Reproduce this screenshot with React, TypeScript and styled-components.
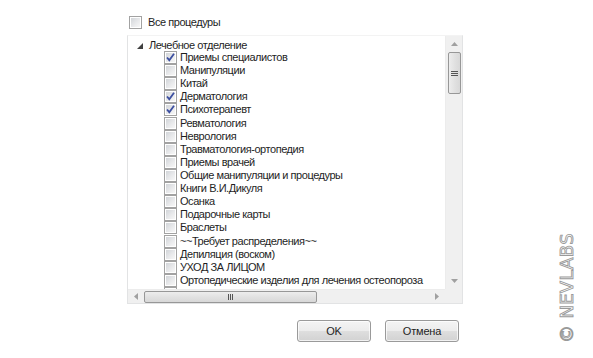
import React from 'react';
import styled, { createGlobalStyle } from 'styled-components';

const GlobalStyle = createGlobalStyle`
  html, body {
    margin: 0;
    padding: 0;
    background: #ffffff;
  }
  body {
    font-family: 'Liberation Sans', Arial, sans-serif;
    font-size: 11px;
    letter-spacing: -0.45px;
    color: #1e1e1e;
  }
`;

const ITEMS: { label: string; checked: boolean }[] = [
  { label: 'Приемы специалистов', checked: true },
  { label: 'Манипуляции', checked: false },
  { label: 'Китай', checked: false },
  { label: 'Дерматология', checked: true },
  { label: 'Психотерапевт', checked: true },
  { label: 'Ревматология', checked: false },
  { label: 'Неврология', checked: false },
  { label: 'Травматология-ортопедия', checked: false },
  { label: 'Приемы врачей', checked: false },
  { label: 'Общие манипуляции и процедуры', checked: false },
  { label: 'Книги В.И.Дикуля', checked: false },
  { label: 'Осанка', checked: false },
  { label: 'Подарочные карты', checked: false },
  { label: 'Браслеты', checked: false },
  { label: '~~Требует распределения~~', checked: false },
  { label: 'Депиляция (воском)', checked: false },
  { label: 'УХОД ЗА ЛИЦОМ', checked: false },
  { label: 'Ортопедические изделия для лечения остеопороза', checked: false },
  { label: 'Прочее', checked: false },
];

const Page = styled.div`
  position: relative;
  width: 593px;
  height: 358px;
  overflow: hidden;
  display: flex;
  flex-direction: column;
  box-sizing: border-box;
  padding: 16px 0 0 127px;
`;

const Row = styled.label`
  display: flex;
  align-items: center;
  gap: 5px;
  height: 13px;
  white-space: nowrap;
  line-height: 13px;
`;

const Box = styled.span`
  position: relative;
  flex: 0 0 auto;
  width: 13px;
  height: 13px;
  box-sizing: border-box;
  border: 1px solid #a2a2a2;
  background: #ffffff;
  &::after {
    content: '';
    position: absolute;
    inset: 1px;
    background: linear-gradient(135deg, #d2d5d9 0%, #e8e9eb 55%, #f7f7f7 100%);
  }
  svg {
    position: absolute;
    left: 0;
    top: 0;
    z-index: 1;
  }
`;

function Checkbox({ checked }: { checked: boolean }) {
  return (
    <Box>
      {checked && (
        <svg width="11" height="11" viewBox="0 0 11 11">
          <path d="M2 5.5 L4.3 8.2 L9 1.8" fill="none" stroke="#3c4fa0" strokeWidth="1.8" />
        </svg>
      )}
    </Box>
  );
}

const AllRow = styled(Row)`
  margin-left: 2px;
  gap: 6px;
`;

const Tree = styled.div`
  margin-top: 6px;
  width: 336px;
  height: 269px;
  box-sizing: border-box;
  border: 1px solid #e2e3e4;
  border-top-color: #f3f3f3;
  display: grid;
  grid-template-columns: 1fr 17px;
  grid-template-rows: 1fr 14px;
`;

const Viewport = styled.div`
  overflow: hidden;
  padding: 3px 0 0 9px;
`;

const GroupRow = styled.div`
  display: flex;
  align-items: center;
  gap: 6px;
  height: 12px;
  line-height: 12px;
  white-space: nowrap;
`;

const Expander = styled.svg`
  width: 6px;
  height: 6px;
  margin-top: 1px;
`;

const Children = styled.div`
  padding-left: 27px;
  display: flex;
  flex-direction: column;
`;

const ItemRow = styled(Row)`
  height: 13.12px;
  gap: 3px;
`;

const VBar = styled.div`
  background: #f0f0f0;
  border-left: 1px solid #ececec;
  display: flex;
  flex-direction: column;
  align-items: center;
`;

const HBar = styled.div`
  background: #f0f0f0;
  border-top: 1px solid #ececec;
  display: flex;
  align-items: center;
`;

const Corner = styled.div`
  background: #f0f0f0;
`;

const ArrowBtn = styled.div<{ $w: number; $h: number }>`
  flex: 0 0 auto;
  width: ${(p) => p.$w}px;
  height: ${(p) => p.$h}px;
  display: flex;
  align-items: center;
  justify-content: center;
`;

const Track = styled.div`
  flex: 1;
  align-self: stretch;
  display: flex;
`;

const VThumb = styled.div`
  margin: 0 auto;
  width: 13px;
  height: 42px;
  box-sizing: border-box;
  border: 1px solid #979797;
  border-radius: 2px;
  background: linear-gradient(90deg, #ededed, #e1e1e1 50%, #d8d8d8);
  display: flex;
  flex-direction: column;
  align-items: center;
  justify-content: center;
  gap: 1px;
`;

const HThumb = styled.div`
  margin: auto 0;
  width: 173px;
  height: 12px;
  box-sizing: border-box;
  border: 1px solid #979797;
  border-radius: 2px;
  background: linear-gradient(180deg, #ededed, #e1e1e1 50%, #d8d8d8);
  display: flex;
  align-items: center;
  justify-content: center;
  gap: 1px;
`;

const GripH = styled.span`
  width: 7px;
  height: 1px;
  background: #555;
`;

const GripV = styled.span`
  width: 1px;
  height: 6px;
  background: #555;
`;

const Arrow = ({ dir }: { dir: 'up' | 'down' | 'left' | 'right' }) => {
  const pts = {
    up: '0,4 3.5,0 7,4',
    down: '0,0 3.5,4 7,0',
    left: '4,0 0,3.5 4,7',
    right: '0,0 4,3.5 0,7',
  }[dir];
  const vertical = dir === 'up' || dir === 'down';
  return (
    <svg width={vertical ? 7 : 4} height={vertical ? 4 : 7} viewBox={vertical ? '0 0 7 4' : '0 0 4 7'}>
      <polygon points={pts} fill="#a0a0a0" />
    </svg>
  );
};

const Footer = styled.div`
  margin-top: 16px;
  display: flex;
  gap: 14px;
  padding-left: 170px;
`;

const Button = styled.button`
  width: 74px;
  height: 22px;
  box-sizing: border-box;
  border: 1px solid #9a9a9a;
  border-radius: 3px;
  background: linear-gradient(180deg, #f4f4f4 0%, #ececec 48%, #dedede 52%, #d2d2d2 100%);
  box-shadow: inset 0 0 0 1px rgba(255, 255, 255, 0.7);
  font-family: 'Liberation Sans', Arial, sans-serif;
  font-size: 11px;
  letter-spacing: -0.2px;
  color: #1e1e1e;
  padding: 0;
`;

const Watermark = styled.div`
  position: absolute;
  left: 566px;
  top: 288px;
  transform: translate(-50%, -50%) rotate(-90deg);
  white-space: nowrap;
  font-family: 'DejaVu Sans', sans-serif;
  font-size: 18px;
  letter-spacing: 0.3px;
  color: transparent;
  -webkit-text-stroke: 0.9px #9a9a9a;
`;

export default function App() {
  return (
    <Page>
      <GlobalStyle />
      <AllRow>
        <Checkbox checked={false} />
        <span>Все процедуры</span>
      </AllRow>
      <Tree>
        <Viewport>
          <GroupRow>
            <Expander viewBox="0 0 6 6">
              <polygon points="6,0 6,6 0,6" fill="#404040" />
            </Expander>
            <span>Лечебное отделение</span>
          </GroupRow>
          <Children>
            {ITEMS.map((it) => (
              <ItemRow key={it.label}>
                <Checkbox checked={it.checked} />
                <span>{it.label}</span>
              </ItemRow>
            ))}
          </Children>
        </Viewport>
        <VBar>
          <ArrowBtn $w={16} $h={16}>
            <Arrow dir="up" />
          </ArrowBtn>
          <Track>
            <VThumb>
              <GripH />
              <GripH />
              <GripH />
            </VThumb>
          </Track>
          <ArrowBtn $w={16} $h={16}>
            <Arrow dir="down" />
          </ArrowBtn>
        </VBar>
        <HBar>
          <ArrowBtn $w={16} $h={12}>
            <Arrow dir="left" />
          </ArrowBtn>
          <Track>
            <HThumb>
              <GripV />
              <GripV />
              <GripV />
            </HThumb>
          </Track>
          <ArrowBtn $w={16} $h={12}>
            <Arrow dir="right" />
          </ArrowBtn>
        </HBar>
        <Corner />
      </Tree>
      <Footer>
        <Button>OK</Button>
        <Button>Отмена</Button>
      </Footer>
      <Watermark>© NEVLABS</Watermark>
    </Page>
  );
}
